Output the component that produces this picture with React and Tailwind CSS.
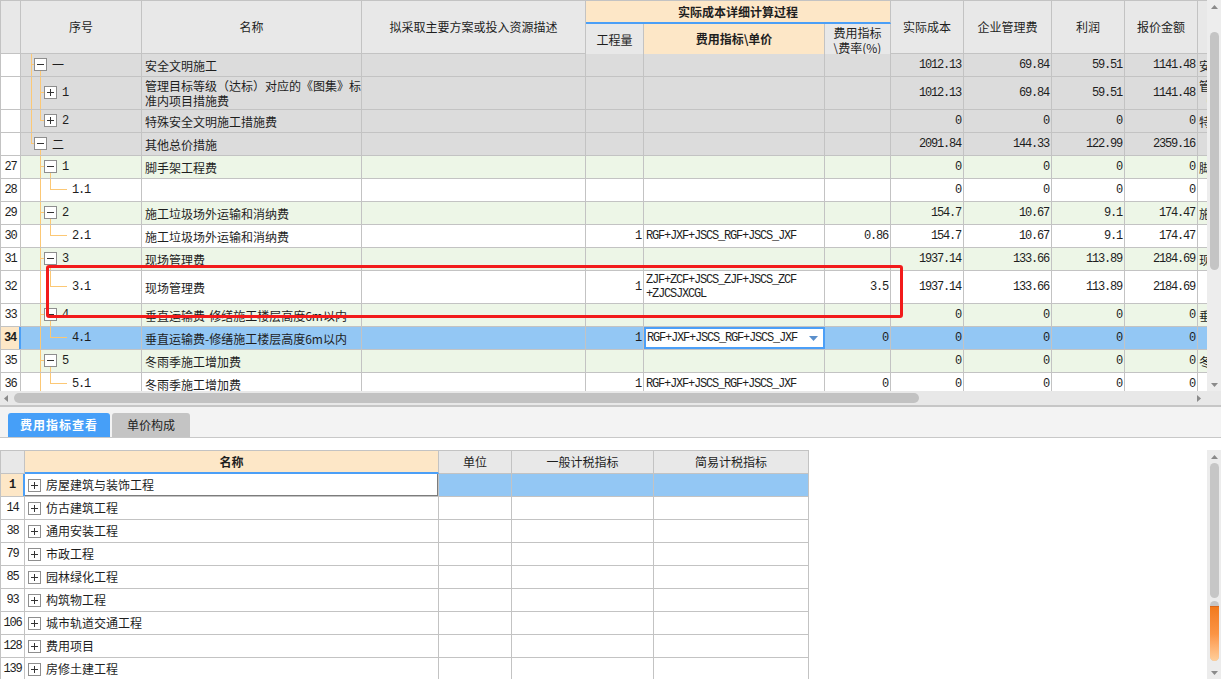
import React from 'react';

const LN = 'border-[#c3c3c3]';
const MONO = "font-['Liberation_Mono',monospace] text-[12px] tracking-[-1.2px]";
const CELL = 'h-full shrink-0 border-r border-[#c3c3c3] flex items-center overflow-hidden';
const HC = 'h-full shrink-0 border-r border-b border-[#c3c3c3] flex items-center';
const NUM = `${CELL} justify-end pr-[2px] ${MONO}`;
const TREE_LINE = '#fcc875';

const F1 = 'RGF+JXF+JSCS_RGF+JSCS_JXF';
const zeros = ['0', '0', '0', '0'];

// tree segments: x in cell px, y keys T=top C=center K=below box B=bottom
const parent = (label) => ({ v: [[19, 'T', 'B'], [29, 'K', 'B']], h: [19, 23], box: [23, '-'], label, lv: 1 });
const leaf = (label) => ({ v: [[19, 'T', 'B'], [29, 'T', 'C']], h: [29, 46], label, lv: 2 });

const topRows = [
  { no: '', kind: 'gray', name: '安全文明施工', tail: '安', vals: ['1012.13', '69.84', '59.51', '1141.48'],
    tree: { v: [[10, 'T', 'B'], [19, 'K', 'B']], h: [10, 13], box: [13, '-'], label: '一', lv: 0 } },
  { no: '', kind: 'gray', tall: true, name: <>管理目标等级（达标）对应的《图集》标<br />准内项目措施费</>, tail: <>管<br />（</>,
    vals: ['1012.13', '69.84', '59.51', '1141.48'],
    tree: { v: [[10, 'T', 'B'], [19, 'T', 'B']], h: [19, 23], box: [23, '+'], label: '1', lv: 1 } },
  { no: '', kind: 'gray', name: '特殊安全文明施工措施费', tail: '特', vals: zeros,
    tree: { v: [[10, 'T', 'B'], [19, 'T', 'C']], h: [19, 23], box: [23, '+'], label: '2', lv: 1 } },
  { no: '', kind: 'gray', name: '其他总价措施', tail: '', vals: ['2091.84', '144.33', '122.99', '2359.16'],
    tree: { v: [[10, 'T', 'C'], [19, 'K', 'B']], h: [10, 13], box: [13, '-'], label: '二', lv: 0 } },
  { no: '27', kind: 'green', name: '脚手架工程费', tail: '脚', vals: zeros, tree: parent('1') },
  { no: '28', kind: 'white', name: '', tail: '', vals: zeros, tree: leaf('1.1') },
  { no: '29', kind: 'green', name: '施工垃圾场外运输和消纳费', tail: '施', vals: ['154.7', '10.67', '9.1', '174.47'], tree: parent('2') },
  { no: '30', kind: 'white', name: '施工垃圾场外运输和消纳费', qty: '1', formula: F1, rate: '0.86', vals: ['154.7', '10.67', '9.1', '174.47'], tree: leaf('2.1') },
  { no: '31', kind: 'green', name: '现场管理费', tail: '现', vals: ['1937.14', '133.66', '113.89', '2184.69'], tree: parent('3') },
  { no: '32', kind: 'white', tall: true, name: '现场管理费', qty: '1', formula: <>ZJF+ZCF+JSCS_ZJF+JSCS_ZCF<br />+ZJCSJXCGL</>, rate: '3.5', vals: ['1937.14', '133.66', '113.89', '2184.69'], tree: leaf('3.1') },
  { no: '33', kind: 'green', name: '垂直运输费-修缮施工楼层高度6m以内', tail: '垂', vals: zeros, tree: parent('4') },
  { no: '34', kind: 'sel', name: '垂直运输费-修缮施工楼层高度6m以内', qty: '1', formula: F1, editing: true, rate: '0', vals: zeros, tree: leaf('4.1') },
  { no: '35', kind: 'green', name: '冬雨季施工增加费', tail: '冬', vals: zeros, tree: parent('5') },
  { no: '36', kind: 'white', name: '冬雨季施工增加费', qty: '1', formula: F1, rate: '0', vals: zeros, tree: leaf('5.1') },
];

const ROW_BG = { gray: 'bg-[#dcdcdc]', green: 'bg-[#edf6e7]', white: 'bg-white', sel: 'bg-[#93c7f4]' };
const LABEL_CLS = ['pl-[31px]', `pl-[41px] ${MONO}`, `pl-[51px] ${MONO}`];
const VAL_W = ['w-[73px]', 'w-[88px]', 'w-[73px]', 'w-[73px]'];

const bottomRows = [
  ['1', '房屋建筑与装饰工程'], ['14', '仿古建筑工程'], ['38', '通用安装工程'], ['79', '市政工程'],
  ['85', '园林绿化工程'], ['93', '构筑物工程'], ['106', '城市轨道交通工程'], ['128', '费用项目'], ['139', '房修土建工程'],
];

function Tree({ inner, t }) {
  const c = inner / 2 - 0.5;
  const Y = { T: 0, C: c, K: c + 6, B: inner };
  return (
    <svg className="absolute left-0 top-0" width="120" height={inner} shapeRendering="crispEdges">
      {t.v.map(([x, a, b], i) => (
        <line key={i} x1={x + 0.5} x2={x + 0.5} y1={Y[a]} y2={Y[b]} stroke={TREE_LINE} />
      ))}
      <line x1={t.h[0]} x2={t.h[1]} y1={c} y2={c} stroke={TREE_LINE} />
      {t.box && (
        <g>
          <rect x={t.box[0] + 0.5} y={c - 6} width="12" height="12" fill="#fff" stroke="#8e8e8e" />
          <line x1={t.box[0] + 3} x2={t.box[0] + 10} y1={c} y2={c} stroke="#333" />
          {t.box[1] === '+' && <line x1={t.box[0] + 6.5} x2={t.box[0] + 6.5} y1={c - 3.5} y2={c + 3.5} stroke="#333" />}
        </g>
      )}
    </svg>
  );
}

function PlusBox() {
  return (
    <svg width="13" height="13" className="shrink-0" shapeRendering="crispEdges">
      <rect x="0.5" y="0.5" width="12" height="12" fill="#fff" stroke="#8e8e8e" />
      <line x1="3" x2="10" y1="6.5" y2="6.5" stroke="#333" />
      <line x1="6.5" x2="6.5" y1="3" y2="10" stroke="#333" />
    </svg>
  );
}

const ArrowUp = () => <svg width="7" height="4" className="shrink-0"><path d="M0 4L3.5 0L7 4Z" fill="#8a8a8a" /></svg>;
const ArrowDown = () => <svg width="7" height="4" className="shrink-0"><path d="M0 0L3.5 4L7 0Z" fill="#8a8a8a" /></svg>;
const ArrowLeft = () => <svg width="4" height="7" className="shrink-0"><path d="M4 0L0 3.5L4 7Z" fill="#8a8a8a" /></svg>;
const ArrowRight = () => <svg width="4" height="7" className="shrink-0"><path d="M0 0L4 3.5L0 7Z" fill="#8a8a8a" /></svg>;

function TopHeader() {
  return (
    <div className={`flex shrink-0 w-[1207px] h-[54px] border-t ${LN} bg-[#e8e8e8]`}>
      <div className={`${HC} w-[21px] border-l`} />
      <div className={`${HC} w-[121px] justify-center`}>序号</div>
      <div className={`${HC} w-[220px] justify-center`}>名称</div>
      <div className={`${HC} w-[224px] justify-center`}>拟采取主要方案或投入资源描述</div>
      <div className="w-[305px] shrink-0 h-full flex flex-col">
        <div className="h-[23px] shrink-0 bg-[#fde7c7] border-r border-b-2 border-[#c3c3c3] border-b-[#4b9ff7] flex items-center justify-center font-bold">
          实际成本详细计算过程
        </div>
        <div className="flex flex-1">
          <div className={`${HC} w-[58px] justify-center`}>工程量</div>
          <div className="h-full shrink-0 w-[181px] bg-[#fde7c7] border-r border-b-2 border-[#c3c3c3] border-b-[#4b9ff7] flex items-center justify-center font-bold">
            {'费用指标\\单价'}
          </div>
          <div className={`${HC} w-[66px] justify-center text-center leading-[15px] pt-[1px]`}>
            <span>费用指标<br />{'\\费率(%)'}</span>
          </div>
        </div>
      </div>
      <div className={`${HC} w-[73px] justify-center`}>实际成本</div>
      <div className={`${HC} w-[88px] justify-center`}>企业管理费</div>
      <div className={`${HC} w-[73px] justify-center`}>利润</div>
      <div className={`${HC} w-[73px] justify-center`}>报价金额</div>
      <div className="h-full shrink-0 w-[9px] border-b border-[#c3c3c3]" />
    </div>
  );
}

function TopRow({ r }) {
  const inner = r.tall ? 32 : 22;
  const sel = r.kind === 'sel';
  return (
    <div className={`flex shrink-0 w-[1207px] border-b ${LN} ${r.tall ? 'h-[33px]' : 'h-[23px]'} ${ROW_BG[r.kind]}`}>
      <div className={`h-full shrink-0 w-[21px] border-l border-[#c3c3c3] flex items-center justify-center ${MONO} ${sel ? 'border-r-2 border-r-[#4b9ff7] bg-[#fde7c7] font-bold' : 'border-r bg-white'}`}>
        {r.no}
      </div>
      <div className={`${CELL} w-[121px] relative`}>
        <Tree inner={inner} t={r.tree} />
        <span className={`relative ${LABEL_CLS[r.tree.lv]}`}>{r.tree.label}</span>
      </div>
      <div className={`${CELL} w-[220px] pl-[3px] leading-[15px] whitespace-nowrap`}>{r.name}</div>
      <div className={`${CELL} w-[224px]`} />
      <div className={`${NUM} w-[58px]`}>{r.qty}</div>
      {r.editing ? (
        <div className="h-full shrink-0 w-[181px] bg-white border-2 border-[#4b9ff7] flex items-center justify-between pl-[1px] pr-[5px]">
          <span className={MONO}>{r.formula}</span>
          <svg width="9" height="5"><path d="M0 0L4.5 5L9 0Z" fill="#5a8fcb" /></svg>
        </div>
      ) : (
        <div className={`${CELL} w-[181px] pl-[2px] leading-[14px] whitespace-nowrap ${MONO}`}>
          <span>{r.formula}</span>
        </div>
      )}
      <div className={`${NUM} w-[66px]`}>{r.rate}</div>
      {r.vals.map((v, i) => (
        <div key={i} className={`${NUM} ${VAL_W[i]}`}>{v}</div>
      ))}
      <div className="h-full shrink-0 w-[9px] overflow-hidden flex items-center pl-[1px] whitespace-nowrap leading-[15px]">
        <span>{r.tail}</span>
      </div>
    </div>
  );
}

function TopVScroll() {
  return (
    <div className="w-[14px] h-full shrink-0 bg-[#ededed] flex flex-col items-center">
      <div className="mt-[5px]"><ArrowUp /></div>
      <div className="mt-[23px] w-[9px] h-[238px] rounded-full bg-[#c4c4c4]" />
      <div className="flex-1" />
      <div className="mb-[4px]"><ArrowDown /></div>
    </div>
  );
}

function BottomVScroll() {
  return (
    <div className="w-[14px] h-full shrink-0 bg-[#ececec] flex flex-col items-center">
      <div className="mt-[5px]"><ArrowUp /></div>
      <div className="mt-[4px] w-[9px] h-[135px] rounded-full bg-[#c6c6c6]" />
      <div className="mt-[3px] w-[9px] h-[60px] rounded-full bg-[#c6c6c6] pt-[5px] flex flex-col">
        <div className="flex-1 rounded-b-full bg-linear-to-b from-[#f27a1b] via-[#fb9444] to-[#ffcf9a] border-t border-[#d9661a]" />
      </div>
      <div className="flex-1" />
      <div className="mb-[4px]"><ArrowDown /></div>
    </div>
  );
}

function BottomGrid() {
  return (
    <div className="w-[809px] flex flex-col">
      <div className={`flex h-[24px] shrink-0 border-t ${LN}`}>
        <div className={`${HC} w-[25px] border-l bg-[#e8e8e8]`} />
        <div className="h-full shrink-0 w-[414px] border-r border-b-2 border-[#c3c3c3] border-b-[#4b9ff7] bg-[#fde7c7] flex items-center justify-center font-bold">
          名称
        </div>
        <div className={`${HC} w-[73px] bg-[#e8e8e8] justify-center`}>单位</div>
        <div className={`${HC} w-[142px] bg-[#e8e8e8] justify-center`}>一般计税指标</div>
        <div className={`${HC} w-[155px] bg-[#e8e8e8] justify-center`}>简易计税指标</div>
      </div>
      {bottomRows.map(([no, name], i) => {
        const sel = i === 0;
        return (
          <div key={no} className={`flex h-[23px] shrink-0 border-b ${LN}`}>
            <div className={`h-full shrink-0 w-[25px] border-l border-[#c3c3c3] flex items-center justify-center ${MONO} ${sel ? 'border-r-2 border-r-[#4b9ff7] bg-[#fde7c7] font-bold' : 'border-r bg-white'}`}>
              {no}
            </div>
            <div className={`${CELL} w-[414px] relative pl-[3px] gap-[5px] bg-white`}>
              <PlusBox />
              <span>{name}</span>
              {sel && (
                <div className="absolute left-0 top-0 right-[-1px] bottom-[-1px] border-r-2 border-b-2 border-[#7c7c7c]" />
              )}
            </div>
            <div className={`${CELL} w-[73px] ${sel ? 'bg-[#93c7f4]' : 'bg-white'}`} />
            <div className={`${CELL} w-[142px] ${sel ? 'bg-[#93c7f4]' : 'bg-white'}`} />
            <div className={`${CELL} w-[155px] ${sel ? 'bg-[#93c7f4]' : 'bg-white'}`} />
          </div>
        );
      })}
    </div>
  );
}

export default function App() {
  return (
    <div className="w-[1221px] h-[679px] overflow-hidden bg-white flex flex-col font-['Noto_Sans_CJK_SC',sans-serif] text-[12px] text-[#1e1e1e]">
      {/* upper grid */}
      <div className="flex shrink-0 h-[391px]">
        <div className="relative w-[1207px] h-full overflow-hidden flex flex-col">
          <TopHeader />
          {topRows.map((r, i) => <TopRow key={i} r={r} />)}
          <div className="absolute left-[46px] top-[265px] w-[857px] h-[53px] border-[3px] border-[#f21b1b] rounded-[3px] pointer-events-none" />
        </div>
        <TopVScroll />
      </div>
      <div className="flex shrink-0 h-[14px]">
        <div className="w-[1207px] h-full bg-[#e8e8e8] flex items-center">
          <div className="ml-[4px]"><ArrowLeft /></div>
          <div className="ml-[6px] w-[905px] h-[10px] rounded-full bg-[#c2c2c2]" />
          <div className="flex-1" />
          <div className="mr-[6px]"><ArrowRight /></div>
        </div>
        <div className="w-[14px] h-full bg-[#e8e8e8]" />
      </div>
      <div className="h-[2px] shrink-0 bg-[#c6c6c6]" />

      {/* tabs */}
      <div className="h-[31px] shrink-0 bg-[#f3f3f3] border-b border-[#c8c8c8] flex items-end pl-[8px] gap-[2px]">
        <div className="h-[24px] w-[102px] rounded-t-[3px] bg-[#469ff8] text-white font-bold tracking-[1px] flex items-center justify-center">
          费用指标查看
        </div>
        <div className="h-[24px] w-[78px] rounded-t-[3px] bg-[#c4c4c4] text-[#222] flex items-center justify-center">
          单价构成
        </div>
      </div>
      <div className="h-[12px] shrink-0" />

      {/* lower grid */}
      <div className="flex flex-1 min-h-0">
        <div className="w-[1207px] h-full overflow-hidden">
          <BottomGrid />
        </div>
        <BottomVScroll />
      </div>
    </div>
  );
}
